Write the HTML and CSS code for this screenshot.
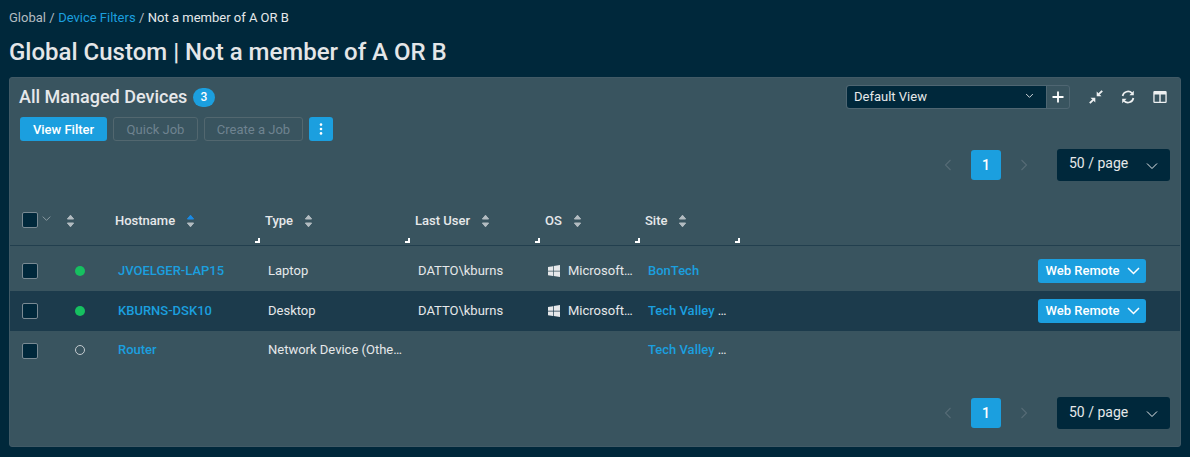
FILE: index.html
```html
<!DOCTYPE html>
<html lang="en">
<head>
<meta charset="utf-8">
<title>Not a member of A OR B</title>
<link rel="stylesheet" href="styles.css">
</head>
<body>
<svg class="defs" width="0" height="0" aria-hidden="true">
  <defs>
    <symbol id="sort" viewBox="0 0 9 14"><path d="M4.5 1.2 7.6 5H1.4Z"/><path d="M1.4 9H7.6L4.5 12.8Z"/></symbol>
    <symbol id="sort-up" viewBox="0 0 9 14"><path d="M4.5 1.2 7.6 5H1.4Z" fill="#1a8ae5" stroke="#1a8ae5"/><path d="M1.4 9H7.6L4.5 12.8Z"/></symbol>
    <symbol id="chev" viewBox="0 0 12 12"><path d="M1.5 4 6 8.5 10.5 4" fill="none" stroke="currentColor" stroke-width="1.2"/></symbol>
    <symbol id="chev-thin" viewBox="0 0 12 12"><path d="M1 3.5 6 8.5 11 3.5" fill="none" stroke="currentColor" stroke-width="1"/></symbol>
    <symbol id="chev-bold" viewBox="0 0 13 13"><path d="M1 4 6.5 9.5 12 4" fill="none" stroke="currentColor" stroke-width="1.5"/></symbol>
    <symbol id="win" viewBox="0 0 12 12"><path d="M0 1.9 5 1.2V5.7H0ZM5.7 1.1 12 0V5.7H5.7ZM0 6.4H5V10.9L0 10.2ZM5.7 6.4H12V12L5.7 11Z" fill="currentColor"/></symbol>
  </defs>
</svg>
<header class="page-head">
  <nav class="crumbs"><span class="crumb-muted">Global</span><span class="crumb-sep">/</span><a class="crumb-link">Device Filters</a><span class="crumb-sep">/</span><span class="crumb-current">Not a member of A OR B</span></nav>
  <h1 class="page-title">Global Custom | Not a member of A OR B</h1>
</header>
<main class="card">
  <div class="card-top">
    <div class="card-title-wrap"><h2 class="card-title">All Managed Devices</h2><span class="count">3</span></div>
    <div class="tools">
      <div class="view-select"><span class="view-box"><span>Default View</span><svg class="view-chev"><use href="#chev"/></svg></span><span class="view-add"><svg width="12" height="12" viewBox="0 0 12 12"><path d="M6 0.5V11.5M0.5 6H11.5" stroke="currentColor" stroke-width="1.8"/></svg></span></div>
      <svg class="tool tool-first" viewBox="0 0 14 14"><path d="M7.7 6.3V1.5L12.5 6.3ZM6.3 7.7V12.5L1.5 7.7Z" fill="currentColor"/><path d="M9.8 4.2 13.2 0.8M4.2 9.8 0.8 13.2" fill="none" stroke="currentColor" stroke-width="1.9"/></svg>
      <svg class="tool" viewBox="0 0 14 14"><path d="M1.6 6A5.5 5.5 0 0 1 11 3.2M12.4 8A5.5 5.5 0 0 1 3 10.8" fill="none" stroke="currentColor" stroke-width="1.7"/><path d="M12.8 0.8V5.2H8.4ZM1.2 13.2V8.8H5.6Z" fill="currentColor"/></svg>
      <svg class="tool" viewBox="0 0 14 14"><path fill-rule="evenodd" d="M1.5 1H12.5A1.2 1.2 0 0 1 13.7 2.2V11.8A1.2 1.2 0 0 1 12.5 13H1.5A1.2 1.2 0 0 1 0.3 11.8V2.2A1.2 1.2 0 0 1 1.5 1ZM1.6 4.6V11.7H6.3V4.6ZM7.7 4.6V11.7H12.4V4.6Z" fill="currentColor"/></svg>
    </div>
  </div>
  <div class="actions">
    <button class="btn btn-primary">View Filter</button>
    <button class="btn btn-disabled">Quick Job</button>
    <button class="btn btn-disabled">Create a Job</button>
    <button class="btn btn-primary btn-more"><svg width="4" height="12" viewBox="0 0 4 12"><circle cx="2" cy="1.6" r="1.3" fill="currentColor"/><circle cx="2" cy="6" r="1.3" fill="currentColor"/><circle cx="2" cy="10.4" r="1.3" fill="currentColor"/></svg></button>
  </div>
  <div class="pager pager-top">
    <svg class="pg-arrow" viewBox="0 0 12 12"><path d="M8.5 1 3.5 6 8.5 11" fill="none" stroke="currentColor" stroke-width="1.1"/></svg>
    <span class="pg-num">1</span>
    <svg class="pg-arrow" viewBox="0 0 12 12"><path d="M3.5 1 8.5 6 3.5 11" fill="none" stroke="currentColor" stroke-width="1.1"/></svg>
    <span class="pg-size"><span>50 / page</span><svg class="pg-chev"><use href="#chev-thin"/></svg></span>
  </div>
  <div class="table">
    <div class="row head">
      <div class="c-check"><span class="box"></span><svg class="head-chev"><use href="#chev-thin"/></svg></div>
      <div class="c-status"><svg class="sort"><use href="#sort"/></svg></div>
      <div class="c-host th">Hostname<svg class="sort"><use href="#sort-up"/></svg><i class="grip"></i></div>
      <div class="c-type th">Type<svg class="sort"><use href="#sort"/></svg><i class="grip"></i></div>
      <div class="c-user th">Last User<svg class="sort"><use href="#sort"/></svg><i class="grip"></i></div>
      <div class="c-os th">OS<svg class="sort"><use href="#sort"/></svg><i class="grip"></i></div>
      <div class="c-site th">Site<svg class="sort"><use href="#sort"/></svg><i class="grip"></i></div>
    </div>
    <div class="row">
      <div class="c-check"><span class="box"></span></div>
      <div class="c-status"><span class="dot"></span></div>
      <div class="c-host td"><a class="link">JVOELGER-LAP15</a></div>
      <div class="c-type td">Laptop</div>
      <div class="c-user td">DATTO\kburns</div>
      <div class="c-os td"><svg class="win"><use href="#win"/></svg><span class="os-name">Microsoft…</span></div>
      <div class="c-site td"><a class="link">BonTech</a></div>
      <div class="c-action"><button class="btn btn-primary btn-remote"><span class="remote-label">Web Remote</span><svg class="remote-chev"><use href="#chev-bold"/></svg></button></div>
    </div>
    <div class="row row-hover">
      <div class="c-check"><span class="box"></span></div>
      <div class="c-status"><span class="dot"></span></div>
      <div class="c-host td"><a class="link">KBURNS-DSK10</a></div>
      <div class="c-type td">Desktop</div>
      <div class="c-user td">DATTO\kburns</div>
      <div class="c-os td"><svg class="win"><use href="#win"/></svg><span class="os-name">Microsoft…</span></div>
      <div class="c-site td"><a class="link">Tech Valley</a><span class="more"> …</span></div>
      <div class="c-action"><button class="btn btn-primary btn-remote"><span class="remote-label">Web Remote</span><svg class="remote-chev"><use href="#chev-bold"/></svg></button></div>
    </div>
    <div class="row row-plain">
      <div class="c-check"><span class="box"></span></div>
      <div class="c-status"><span class="dot dot-off"></span></div>
      <div class="c-host td"><a class="link">Router</a></div>
      <div class="c-type td">Network Device (Othe…</div>
      <div class="c-user td"></div>
      <div class="c-os td"></div>
      <div class="c-site td"><a class="link">Tech Valley</a><span class="more"> …</span></div>
    </div>
  </div>
  <div class="pager pager-bottom">
    <svg class="pg-arrow" viewBox="0 0 12 12"><path d="M8.5 1 3.5 6 8.5 11" fill="none" stroke="currentColor" stroke-width="1.1"/></svg>
    <span class="pg-num">1</span>
    <svg class="pg-arrow" viewBox="0 0 12 12"><path d="M3.5 1 8.5 6 3.5 11" fill="none" stroke="currentColor" stroke-width="1.1"/></svg>
    <span class="pg-size"><span>50 / page</span><svg class="pg-chev"><use href="#chev-thin"/></svg></span>
  </div>
</main>
</body>
</html>
```
FILE: styles.css
```css
* { box-sizing: border-box; }
html, body { height: 100%; }
body {
  margin: 0;
  overflow: hidden;
  background: #00283b;
  color: #e6e8ea;
  font-family: Roboto, "Liberation Sans", sans-serif;
  font-size: 13px;
  line-height: 20px;
}
.defs { position: absolute; }
.page-head { padding: 8px 9px 0; height: 77px; }
.crumbs { display: flex; gap: 3.4px; font-size: 13px; height: 20px; color: #b4bcc1; }
.crumb-link { color: #1b9fdf; }
.crumb-current { color: #e6e8ea; }
.page-title { margin: 8px 0 0; font-size: 24px; line-height: 32px; font-weight: 500; color: #e4e6e8; }
.card {
  width: 1172px;
  height: 370px;
  margin-left: 9px;
  background: #39545f;
  border-radius: 3px;
  border: 1px solid #415a66;
  display: flex;
  flex-direction: column;
}
.card-top { display: flex; justify-content: space-between; align-items: flex-start; padding: 6px 13px 0 9px; height: 39px; }
.card-title-wrap { display: flex; align-items: center; gap: 5.5px; height: 26px; }
.card-title { margin: 0; font-size: 18px; font-weight: 500; color: #e6e8ea; }
.count { width: 22px; height: 19px; border-radius: 10px; background: #1b9fdf; color: #fff; font-size: 12px; line-height: 19px; text-align: center; font-weight: 500; }
.tools { display: flex; align-items: center; height: 24px; margin-top: 1px; }
.view-select { display: flex; height: 24px; border: 1px solid #4f6672; border-radius: 3px; }
.view-box { width: 199px; background: #00283b; color: #e6e8ea; display: flex; align-items: center; justify-content: space-between; padding: 0 12px 0 7px; font-size: 13px; border-radius: 3px 0 0 3px; }
.view-chev { width: 9px; height: 9px; margin-top: -3px; }
.view-add { width: 23px; display: flex; align-items: center; justify-content: center; color: #fff; border-left: 1px solid #4f6672; }
.tool { width: 14px; height: 14px; margin-left: 18px; color: #eef0f1; flex: none; }
.tool-first { margin-left: 19px; }
.actions { display: flex; gap: 6px; padding-left: 10px; height: 24px; }
.btn { font-family: inherit; font-size: 13px; font-weight: 500; height: 24px; border-radius: 3px; border: 1px solid transparent; padding: 0; display: inline-flex; align-items: center; justify-content: center; }
.btn-primary { background: #1b9fdf; color: #fff; }
.btn-disabled { background: transparent; border-color: #52676f; color: #6f8390; font-weight: 400; }
.actions .btn:nth-child(1) { width: 87px; }
.actions .btn:nth-child(2) { width: 85px; }
.actions .btn:nth-child(3) { width: 99px; }
.btn-more { width: 24px; }
.pager { display: flex; align-items: center; justify-content: flex-end; padding-right: 10px; height: 32px; }
.pager-top { margin-top: 8px; }
.pager-bottom { margin-top: 26px; }
.pg-arrow { width: 12px; height: 12px; color: #566b76; flex: none; }
.pg-num { width: 30px; height: 30px; background: #1b9fdf; border-radius: 3px; color: #fff; font-weight: 500; font-size: 14px; display: flex; align-items: center; justify-content: center; margin: 0 17px; }
.pg-size { width: 113px; height: 32px; margin-left: 27px; background: #00283b; border-radius: 3px; display: flex; align-items: center; justify-content: space-between; padding: 0 12px 4px 12px; color: #e6e8ea; font-size: 14px; }
.pg-chev { width: 12px; height: 12px; margin-top: 5px; }
.pager-bottom .pg-size { padding-bottom: 2px; }
.pager-bottom .pg-chev { margin-top: 3px; }
.table { margin-top: 16px; }
.row { display: flex; height: 40px; align-items: center; position: relative; }
.row.head { height: 49px; border-bottom: 1px solid #223f4e; margin-bottom: 5px; padding-bottom: 1px; }
.row-hover { background: #1c3b4c; }
.c-check { width: 50px; padding-left: 12px; display: flex; align-items: center; }
.c-status { width: 55px; height: 100%; display: flex; align-items: center; justify-content: flex-start; padding-left: 15px; }
.c-host { width: 150px; }
.c-type { width: 150px; }
.c-user { width: 130px; }
.c-os { width: 100px; }
.c-site { width: 100px; }
.td { padding-left: 3px; display: flex; align-items: center; font-size: 13px; color: #e6e8ea; height: 100%; white-space: pre; }
.row-plain .td, .row-plain .c-status { padding-bottom: 2px; }
.th { position: relative; height: 100%; display: flex; align-items: center; font-weight: 500; font-size: 13px; color: #e6e8ea; }
.row.head .c-check { height: 100%; }
.head .c-status { padding-left: 6px; }
.box { width: 16px; height: 16px; background: #00283b; border: 1px solid #7a8a93; border-radius: 2px; flex: none; }
.head .box { margin-bottom: 2px; }
.head-chev { width: 9px; height: 9px; color: #a5b0b6; margin: -5px 0 0 4px; }
.sort { width: 9px; height: 14px; fill: #b3bcc1; stroke: #b3bcc1; stroke-width: 1; stroke-linejoin: round; margin-left: 11px; flex: none; }
.c-status .sort { margin-left: 0; }
.grip { position: absolute; right: 5px; bottom: 1px; width: 5px; height: 5px; border-right: 2px solid #fff; border-bottom: 2px solid #fff; }
.dot { width: 10px; height: 10px; border-radius: 50%; background: #16c060; }
.dot-off { background: transparent; border: 1px solid #c4cbd0; }
.link { color: #1b9fdf; font-weight: 500; }
.more { color: #e6e8ea; }
.win { width: 12px; height: 12px; color: #e6e8ea; margin-right: 8px; flex: none; }
.c-action { position: absolute; right: 34px; top: 8px; }
.btn-remote { width: 108px; height: 24px; gap: 8px; font-size: 13px; padding-left: 2px; }
.remote-label { margin-top: -2px; }
.remote-chev { width: 13px; height: 13px; margin-top: -1px; }
```
